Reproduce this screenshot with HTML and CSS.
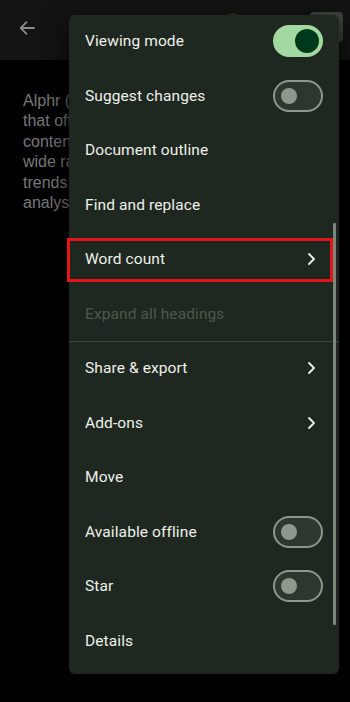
FILE: index.html
```html
<!DOCTYPE html>
<html>
    <head>
        <title>Document menu</title>
        <link rel="stylesheet" href="styles.css">
    </head>
    <body>
        <div class="appbar">
            <svg class="back" width="18" height="18" viewBox="0 0 18 18">
                <path d="M16 9H3M8.5 3.2L2.7 9l5.8 5.8" fill="none" stroke="#8a8a8a" stroke-width="1.8" stroke-linecap="round" stroke-linejoin="round"/>
            </svg>
            <div class="spacer"></div>
            <div class="avatar"></div>
            <div class="square"></div>
        </div>
        <p class="doc">
            Alphr (www.alphr.com) is a website<br>
            that offers technology news and<br>
            content for readers interested in a<br>
            wide range of gadgets, apps, and<br>
            trends with reviews, guides and<br>
            analysis.
        </p>

        <div class="menu">
            <div class="item">
                <span>Viewing mode</span>
                <div class="toggle on"><i></i></div>
            </div>
            <div class="item">
                <span>Suggest changes</span>
                <div class="toggle"><i></i></div>
            </div>
            <div class="item"><span>Document outline</span></div>
            <div class="item"><span>Find and replace</span></div>
            <div class="item picked">
                <span>Word count</span>
                <svg class="chev" width="10" height="14" viewBox="0 0 10 14"><path d="M3 2l5 5-5 5" fill="none" stroke="#eef0ea" stroke-width="1.8" stroke-linecap="round" stroke-linejoin="round"/></svg>
            </div>
            <div class="item off"><span>Expand all headings</span></div>
            <div class="divider"></div>
            <div class="item">
                <span>Share &amp; export</span>
                <svg class="chev" width="10" height="14" viewBox="0 0 10 14"><path d="M3 2l5 5-5 5" fill="none" stroke="#eef0ea" stroke-width="1.8" stroke-linecap="round" stroke-linejoin="round"/></svg>
            </div>
            <div class="item">
                <span>Add-ons</span>
                <svg class="chev" width="10" height="14" viewBox="0 0 10 14"><path d="M3 2l5 5-5 5" fill="none" stroke="#eef0ea" stroke-width="1.8" stroke-linecap="round" stroke-linejoin="round"/></svg>
            </div>
            <div class="item"><span>Move</span></div>
            <div class="item">
                <span>Available offline</span>
                <div class="toggle"><i></i></div>
            </div>
            <div class="item">
                <span>Star</span>
                <div class="toggle"><i></i></div>
            </div>
            <div class="item"><span>Details</span></div>
            <div class="scroll"></div>
        </div>
    </body>
</html>
```

FILE: styles.css
```css
* {
    margin: 0;
    padding: 0;
    box-sizing: border-box;
}
body {
    background-color: #000;
    font-family: "Liberation Sans", Arial, sans-serif;
    width: 350px;
    height: 702px;
    overflow: hidden;
    position: relative;
}
.appbar {
    height: 60px;
    background-color: #121312;
    display: flex;
    align-items: flex-start;
    padding: 19px 0 0 18px;
}
.back {
    display: block;
}
.spacer {
    flex: 1;
}
.avatar {
    width: 14px;
    height: 14px;
    border-radius: 50%;
    background-color: #2a2f2a;
    margin: -6px 70px 0 0;
}
.square {
    width: 33px;
    height: 30px;
    border-radius: 4px;
    background-color: #3c423b;
    margin: -7px 7px 0 0;
}
.doc {
    color: #787878;
    font-size: 16px;
    line-height: 20.4px;
    margin: 31px 0 0 23px;
    white-space: nowrap;
}
.menu {
    position: absolute;
    left: 69px;
    top: 15px;
    width: 270px;
    height: 659px;
    background-color: #1f2820;
    border-radius: 6px;
    box-shadow: 0 10px 24px rgba(0, 0, 0, 0.8);
    font-family: Roboto, "Noto Sans", sans-serif;
}
.item {
    height: 54.5px;
    display: flex;
    align-items: center;
    justify-content: space-between;
    padding: 0 16px 2px 16px;
    color: #eef0ea;
    font-size: 15.5px;
    letter-spacing: 0.1px;
}
.item.off {
    color: #4d574c;
}
.item.picked {
    position: relative;
}
.item.picked::after {
    content: "";
    position: absolute;
    left: -2px;
    right: 6px;
    top: 5px;
    bottom: 6px;
    border: 3px solid #e8141b;
}
.chev {
    margin-right: 7px;
}
.divider {
    height: 1px;
    background-color: #3b453a;
    margin: -1px 0 0 0;
}
.toggle {
    width: 50px;
    height: 32px;
    border-radius: 16px;
    border: 2px solid #8d978b;
    background-color: #2e372e;
    display: flex;
    align-items: center;
    padding-left: 6px;
}
.toggle i {
    width: 16px;
    height: 16px;
    border-radius: 50%;
    background-color: #8f988d;
}
.toggle.on {
    border-color: #a3d8a0;
    background-color: #a3d8a0;
    justify-content: flex-end;
    padding: 0 2px 0 0;
}
.toggle.on i {
    width: 24px;
    height: 24px;
    background-color: #00391a;
}
.scroll {
    position: absolute;
    right: 3px;
    top: 208px;
    width: 3px;
    height: 402px;
    border-radius: 1px;
    background-color: #7b8779;
}
```
